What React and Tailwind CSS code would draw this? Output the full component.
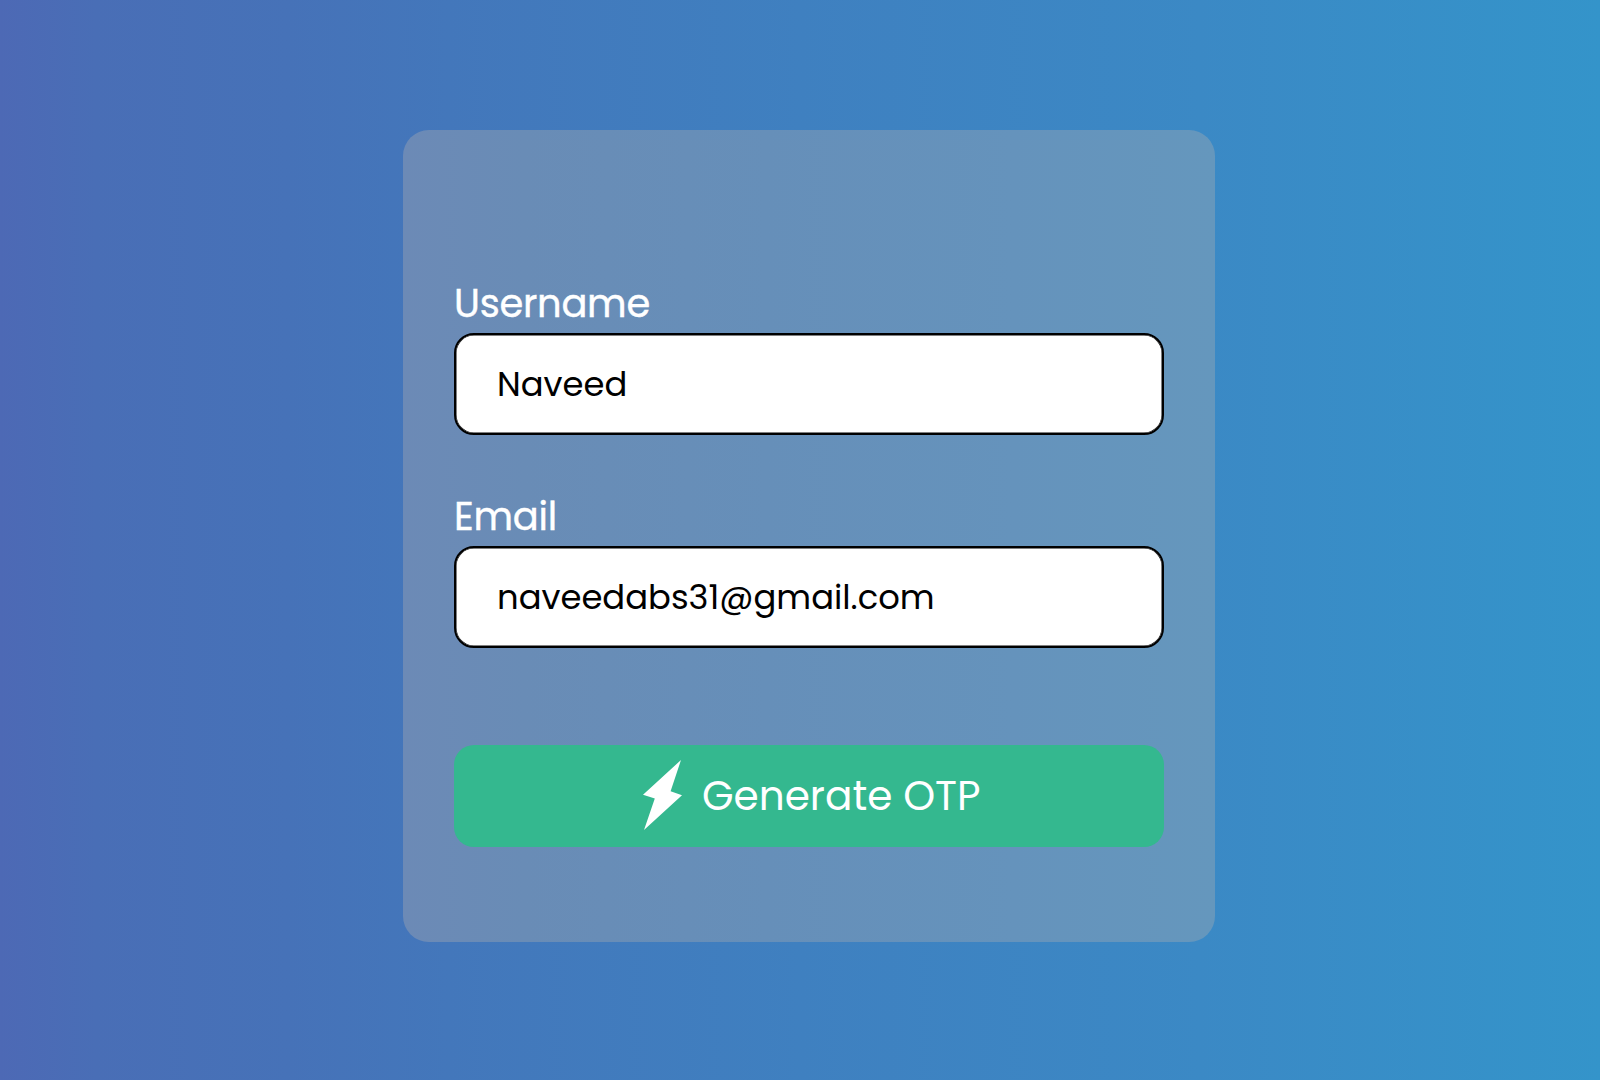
function Field({ label, value, type }) {
  return (
    <label className="flex w-[710px] flex-col">
      <span className="h-[60px] pt-px text-[38.4px] leading-[60px] tracking-[-0.25px] text-white [-webkit-text-stroke:0.4px_white]">
        {label}
      </span>
      <input
        type={type}
        defaultValue={value}
        className="h-[102px] w-full rounded-[20px] border-2 border-black bg-white pt-0.5 pr-10 pl-[41px] text-[33.8px] text-black shadow-[inset_0_0_0_0.5px_#000] outline-none"
      />
    </label>
  );
}

export default function App() {
  return (
    <main className="flex h-[1080px] w-[1600px] justify-center overflow-hidden bg-[linear-gradient(90deg,#4d69b5_0%,#496eb6_6%,#4672b8_18%,#4377bb_28%,#3f80c0_50%,#3b89c5_75%,#3494ca_100%)] pt-[130px] pl-[18px] font-['Poppins','Inter',sans-serif]">
      <form className="flex h-[812px] w-[812px] flex-col items-center rounded-[26px] bg-[linear-gradient(90deg,#6c8ab6_0%,#698cb6_15%,#668fb9_45%,#6593bc_75%,#6597bd_100%)] pt-[143px]">
        <Field label="Username" value="Naveed" type="text" />
        <div className="mt-[51px]">
          <Field label="Email" value="naveedabs31@gmail.com" type="email" />
        </div>
        <button
          type="button"
          className="mt-[97px] flex h-[102px] w-[710px] items-center rounded-[20px] bg-[#34b88f] pb-0.5 pl-[188px] text-[40.6px] text-white"
        >
          <svg viewBox="0 0 40 70" className="h-[70px] w-10" fill="currentColor">
            <path d="M39 0 1 34.7 12.8 38.5 2 70 40 35.3 28.6 31.2Z" />
          </svg>
          <span className="ml-5 pt-0.5">Generate OTP</span>
        </button>
      </form>
    </main>
  );
}
